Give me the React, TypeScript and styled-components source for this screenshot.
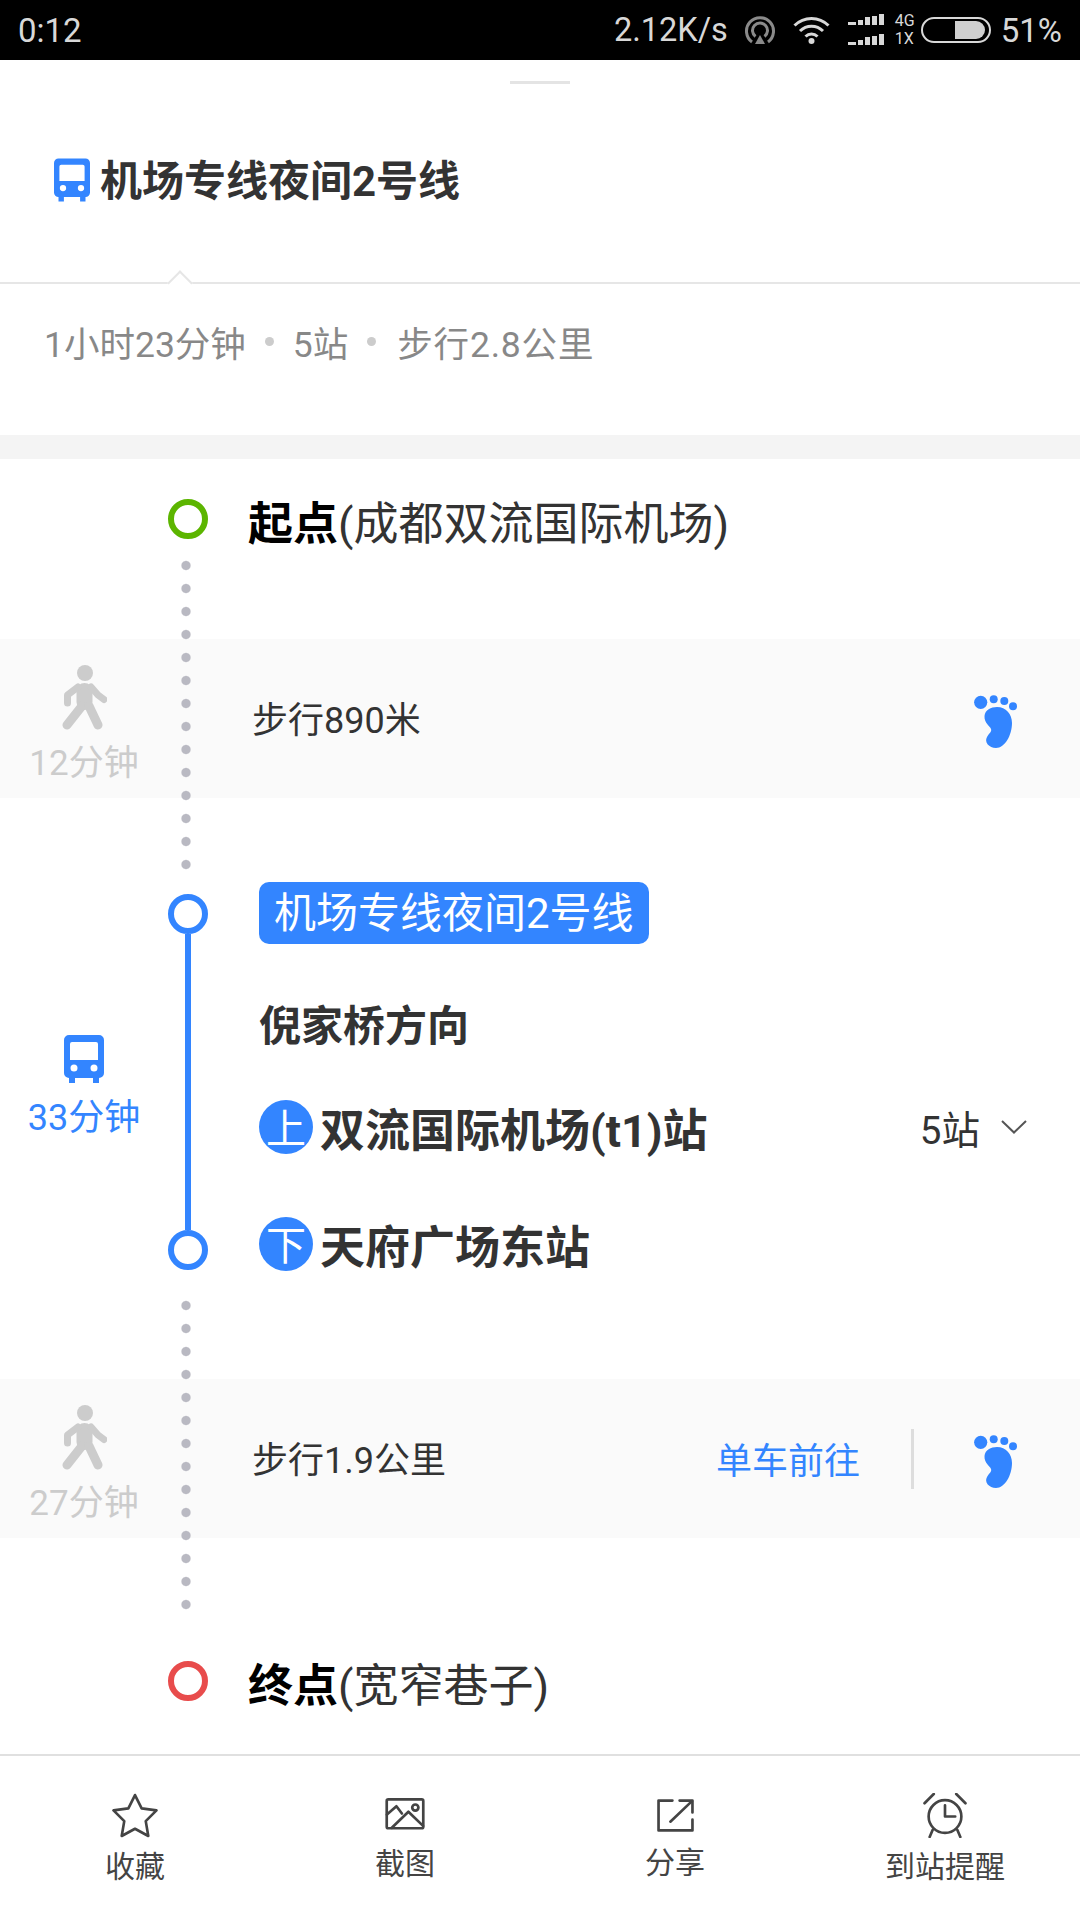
import React from 'react';
import styled, { createGlobalStyle } from 'styled-components';

const BLUE = '#3385ff';
const FONT = 'Roboto, "Noto Sans CJK SC", sans-serif';

const GlobalStyle = createGlobalStyle`
    html, body {
        margin: 0;
        padding: 0;
        background: #fff;
    }
    * {
        box-sizing: border-box;
    }
`;

const Page = styled.div`
    color: #333;
    display: flex;
    flex-direction: column;
    font-family: ${FONT};
    height: 1920px;
    overflow: hidden;
    width: 1080px;
`;

const StatusBar = styled.div`
    align-items: center;
    background: #000;
    color: #d8d8d8;
    display: flex;
    flex-shrink: 0;
    font-size: 33px;
    height: 60px;
    padding: 0 18px;
`;

const StatusSpeed = styled.span`
    font-size: 32.5px;
    margin-left: auto;
    margin-right: 17px;
`;

const StatusIcon = styled.svg<{ $left?: number }>`
    display: block;
    flex-shrink: 0;
    margin-left: ${props => props.$left || 0}px;
`;

const NetworkLabel = styled.div`
    display: flex;
    flex-direction: column;
    font-size: 16px;
    line-height: 18px;
    margin: 0 6px 0 11px;
`;

const StatusPercent = styled.span`
    margin-left: 10px;
`;

const Header = styled.div`
    border-bottom: 2px solid #e6e6e6;
    flex-shrink: 0;
    height: 224px;
    padding-top: 21px;
    position: relative;
`;

const Handle = styled.div`
    background: #e4e4e4;
    height: 3px;
    margin: 0 auto;
    width: 60px;
`;

const TitleRow = styled.div`
    align-items: center;
    display: flex;
    gap: 10px;
    margin-top: 68px;
    padding-left: 54px;
`;

const Title = styled.h1`
    color: #333;
    font-size: 42px;
    font-weight: 700;
    line-height: 60px;
    margin: 0;
`;

const Notch = styled.div`
    background: #fff;
    border-left: 2px solid #e6e6e6;
    border-top: 2px solid #e6e6e6;
    bottom: -10px;
    height: 18px;
    left: 171px;
    position: absolute;
    transform: rotate(45deg);
    width: 18px;
`;

const Summary = styled.div`
    align-items: center;
    color: #888;
    display: flex;
    flex-shrink: 0;
    font-size: 35.5px;
    gap: 19px;
    height: 151px;
    padding: 0 0 36px 44px;
`;

const SummaryDot = styled.span`
    background: #ccc;
    border-radius: 50%;
    height: 9px;
    width: 9px;
`;

const SummaryWalk = styled.span`
    letter-spacing: 0.8px;
    margin-left: 2px;
`;

const Gap = styled.div`
    background: #f4f4f4;
    flex-shrink: 0;
    height: 24px;
`;

const Route = styled.div`
    display: flex;
    flex: 1;
    flex-direction: column;
    min-height: 0;
`;

const EndpointRow = styled.div<{ $top: number }>`
    align-items: flex-start;
    display: flex;
    padding: ${props => props.$top}px 0 0 168px;
`;

const Ring = styled.div<{ $color: string }>`
    border: 6px solid ${props => props.$color};
    border-radius: 50%;
    flex-shrink: 0;
    height: 40px;
    width: 40px;
`;

const EndpointText = styled.div`
    color: #333;
    font-size: 45px;
    line-height: 60px;
    margin: -4px 0 -20px 40px;

    b {
        color: #000;
        font-weight: 700;
    }
`;

const WalkSegment = styled.div<{ $top: number; $bottom: number }>`
    padding: ${props => props.$top}px 0 ${props => props.$bottom}px;
    position: relative;
`;

const DotTrail = styled.div<{ $top: number }>`
    background-image: radial-gradient(circle at center, #b9b9c2 0, #b9b9c2 4px, rgba(185, 185, 194, 0) 5.2px);
    background-position: center top;
    background-repeat: repeat-y;
    background-size: 12px 23px;
    height: 322px;
    left: 180px;
    position: absolute;
    top: ${props => props.$top}px;
    width: 12px;
`;

const WalkBand = styled.div`
    align-items: center;
    background: #fafafa;
    display: flex;
    height: 159px;
    padding-right: 62px;
`;

const TimeColumn = styled.div<{ $color: string }>`
    align-items: center;
    color: ${props => props.$color};
    display: flex;
    flex-direction: column;
    flex-shrink: 0;
    font-size: 35px;
    line-height: 48px;
    padding-top: 15px;
    width: 168px;
`;

const WalkIconWrap = styled.svg`
    display: block;
    margin-bottom: 10px;
`;

const WalkText = styled.div`
    font-size: 36px;
    margin: 0 0 4px 84px;
`;

const BikeLink = styled.div`
    color: ${BLUE};
    font-size: 36px;
    margin: 0 0 2px auto;
`;

const BandDivider = styled.div`
    background: #ddd;
    height: 60px;
    margin: 0 60px 0 51px;
    width: 3px;
`;

const FootIcon = styled.svg<{ $auto?: boolean }>`
    display: block;
    flex-shrink: 0;
    margin-left: ${props => (props.$auto ? 'auto' : '0')};
    margin-top: 6px;
`;

const BusLeg = styled.div`
    display: flex;
    height: 388px;
`;

const BusTime = styled(TimeColumn)`
    font-size: 36px;
    padding-top: 153px;
`;

const BusIcon = styled.svg`
    display: block;
    flex-shrink: 0;
`;

const LineColumn = styled.div`
    align-items: center;
    display: flex;
    flex-direction: column;
    flex-shrink: 0;
    padding-top: 12px;
    width: 40px;
`;

const BusLine = styled.div`
    background: ${BLUE};
    flex: 1;
    width: 6px;
`;

const BusContent = styled.div`
    display: flex;
    flex: 1;
    flex-direction: column;
    padding: 0 53px 0 51px;
`;

const LineTag = styled.div`
    align-self: flex-start;
    background: ${BLUE};
    border-radius: 10px;
    color: #fff;
    font-size: 42px;
    height: 62px;
    line-height: 64px;
    padding: 0 15px;
`;

const Direction = styled.div`
    color: #333;
    font-size: 42px;
    font-weight: 700;
    line-height: 60px;
    margin-top: 53px;
`;

const StopRow = styled.div<{ $top: number }>`
    align-items: center;
    display: flex;
    height: 54px;
    margin-top: ${props => props.$top}px;
`;

const StopBadge = styled.div`
    align-items: center;
    background: ${BLUE};
    border-radius: 50%;
    color: #fff;
    display: flex;
    flex-shrink: 0;
    font-size: 40px;
    height: 54px;
    justify-content: center;
    padding-bottom: 3px;
    width: 54px;
`;

const StopName = styled.div`
    color: #333;
    font-size: 45px;
    font-weight: 700;
    margin-left: 7px;
`;

const StopCount = styled.div`
    align-items: center;
    display: flex;
    font-size: 38.5px;
    gap: 21px;
    margin-left: auto;
`;

const TabBar = styled.div`
    border-top: 2px solid #e0e0e0;
    display: grid;
    flex-shrink: 0;
    grid-template-columns: repeat(4, 1fr);
    height: 166px;
`;

const Tab = styled.div<{ $iconTop: number; $labelGap: number }>`
    align-items: center;
    color: #444;
    display: flex;
    flex-direction: column;
    font-size: 30px;
    gap: ${props => props.$labelGap}px;
    line-height: 40px;
    padding-top: ${props => props.$iconTop}px;
`;

const TabIcon = styled.svg`
    display: block;
    fill: none;
    stroke: #444;
    stroke-linecap: round;
    stroke-linejoin: round;
    stroke-width: 2.6;
`;

const Bus: React.FC<{ className?: string; width: number; height: number }> = ({ className, width, height }) => (
    <BusIcon className={className} width={width} height={height} viewBox="0 0 40 48">
        <path
            fill={BLUE}
            fillRule="evenodd"
            d="M5 0H35A5 5 0 0 1 40 5V38A5 5 0 0 1 35 43V48H29V43H11V48H5V43A5 5 0 0 1 0 38V5A5 5 0 0 1 5 0ZM8 7A2 2 0 0 0 6 9V25H34V9A2 2 0 0 0 32 7ZM10 29.5A3.5 3.5 0 1 0 10 36.5A3.5 3.5 0 1 0 10 29.5ZM30 29.5A3.5 3.5 0 1 0 30 36.5A3.5 3.5 0 1 0 30 29.5Z"
        />
    </BusIcon>
);

const TitleBus = styled(Bus)`
    margin-top: -4px;
`;

const BusTimeIcon = styled(Bus)`
    margin-bottom: 11px;
`;

const Walker = () => (
    <WalkIconWrap width={45} height={65} viewBox="0 0 45 65">
        <circle cx="23" cy="8" r="8" fill="#ccc" />
        <g fill="none" stroke="#ccc" strokeLinecap="round" strokeLinejoin="round">
            <path d="M22.500 26V37" strokeWidth="16" />
            <path d="M16 22L5.500 30V38" strokeWidth="7" />
            <path d="M29 22L36 30L42 34.500" strokeWidth="7" />
            <path d="M20 41L5 60" strokeWidth="9" />
            <path d="M27 41L36 60" strokeWidth="9" />
        </g>
    </WalkIconWrap>
);

const Foot: React.FC<{ auto?: boolean }> = ({ auto }) => (
    <FootIcon $auto={auto} width={44} height={54} viewBox="0 0 44 54" fill={BLUE}>
        <circle cx="6.7" cy="7.3" r="6.6" />
        <circle cx="19.7" cy="4.3" r="4" />
        <circle cx="30.3" cy="6" r="4" />
        <circle cx="39" cy="11.3" r="4" />
        <path d="M23 12C32 12 38 19 38 28C38 40 31 53 22 53C15 53 10 47 13 42C15 38 18 37 17 34C16 31 10 28 10.5 21C11 15 17 12 23 12Z" />
    </FootIcon>
);

const App: React.FC = () => (
    <Page>
        <GlobalStyle />
        <StatusBar>
            <span>0:12</span>
            <StatusSpeed>2.12K/s</StatusSpeed>
            <StatusIcon width={30} height={30} viewBox="0 0 30 30" fill="none" stroke="#8a8a8a" strokeWidth="3">
                <path d="M7 27A13.5 13.5 0 1 1 23 27" />
                <path d="M10.5 21.5A7.5 7.5 0 1 1 19.5 21.5" />
                <path d="M15 20L20 29H10Z" fill="#8a8a8a" stroke="none" />
            </StatusIcon>
            <StatusIcon $left={18} width={37} height={28} viewBox="0 0 37 28" fill="none" stroke="#d8d8d8" strokeWidth="3">
                <path d="M1.5 9.5C11 0 26 0 35.5 9.5" />
                <path d="M7 15C13.5 8.500 23.500 8.500 30 15" />
                <path d="M12.500 20.500C16 17 21 17 24.500 20.500" />
                <circle cx="18.500" cy="25" r="3" fill="#d8d8d8" stroke="none" />
            </StatusIcon>
            <StatusIcon $left={18} width={36} height={32} viewBox="0 0 36 32" fill="#d8d8d8">
                <rect x="0" y="8" width="8" height="3" />
                <rect x="10" y="6" width="5" height="5" />
                <rect x="17" y="3" width="5" height="8" />
                <rect x="24" y="2" width="5" height="9" />
                <rect x="31" y="0" width="5" height="11" />
                <rect x="0" y="28" width="8" height="3" />
                <rect x="10" y="26" width="5" height="5" />
                <rect x="17" y="23" width="5" height="8" />
                <rect x="24" y="22" width="5" height="9" />
                <rect x="31" y="20" width="5" height="11" />
            </StatusIcon>
            <NetworkLabel>
                <span>4G</span>
                <span>1X</span>
            </NetworkLabel>
            <StatusIcon width={70} height={26} viewBox="0 0 70 26">
                <rect x="1" y="1" width="68" height="24" rx="12" fill="none" stroke="#d8d8d8" strokeWidth="2" />
                <path d="M34 4H55A9 9 0 0 1 64 13A9 9 0 0 1 55 22H34Z" fill="#d0d0d0" />
            </StatusIcon>
            <StatusPercent>51%</StatusPercent>
        </StatusBar>

        <Header>
            <Handle />
            <TitleRow>
                <TitleBus width={36} height={44} />
                <Title>机场专线夜间2号线</Title>
            </TitleRow>
            <Notch />
        </Header>
        <Summary>
            <span>1小时23分钟</span>
            <SummaryDot />
            <span>5站</span>
            <SummaryDot />
            <SummaryWalk>步行2.8公里</SummaryWalk>
        </Summary>
        <Gap />

        <Route>
            <EndpointRow $top={40}>
                <Ring $color="#5cb500" />
                <EndpointText>
                    <b>起点</b>(成都双流国际机场)
                </EndpointText>
            </EndpointRow>
            <WalkSegment $top={100} $bottom={84}>
                <DotTrail $top={15} />
                <WalkBand>
                    <TimeColumn $color="#ccc">
                        <Walker />
                        <span>12分钟</span>
                    </TimeColumn>
                    <WalkText>步行890米</WalkText>
                    <Foot auto />
                </WalkBand>
            </WalkSegment>
            <BusLeg>
                <BusTime $color={BLUE}>
                    <BusTimeIcon width={40} height={48} />
                    <span>33分钟</span>
                </BusTime>
                <LineColumn>
                    <Ring $color={BLUE} />
                    <BusLine />
                    <Ring $color={BLUE} />
                </LineColumn>
                <BusContent>
                    <LineTag>机场专线夜间2号线</LineTag>
                    <Direction>倪家桥方向</Direction>
                    <StopRow $top={43}>
                        <StopBadge>上</StopBadge>
                        <StopName>双流国际机场(t1)站</StopName>
                        <StopCount>
                            <span>5站</span>
                            <svg width={26} height={14} viewBox="0 0 26 14" fill="none" stroke="#555" strokeWidth="2">
                                <path d="M1 1L13 12.500L25 1" />
                            </svg>
                        </StopCount>
                    </StopRow>
                    <StopRow $top={63}>
                        <StopBadge>下</StopBadge>
                        <StopName>天府广场东站</StopName>
                    </StopRow>
                </BusContent>
            </BusLeg>
            <WalkSegment $top={109} $bottom={123}>
                <DotTrail $top={24} />
                <WalkBand>
                    <TimeColumn $color="#ccc">
                        <Walker />
                        <span>27分钟</span>
                    </TimeColumn>
                    <WalkText>步行1.9公里</WalkText>
                    <BikeLink>单车前往</BikeLink>
                    <BandDivider />
                    <Foot />
                </WalkBand>
            </WalkSegment>
            <EndpointRow $top={0}>
                <Ring $color="#e84c4c" />
                <EndpointText>
                    <b>终点</b>(宽窄巷子)
                </EndpointText>
            </EndpointRow>
        </Route>

        <TabBar>
            <Tab $iconTop={37} $labelGap={9}>
                <TabIcon width={46} height={45} viewBox="0 0 44 44">
                    <path d="M22 2L28.500 15L43 17L32.500 27.500L35 42L22 35L9 42L11.500 27.500L1 17L15.500 15Z" />
                </TabIcon>
                <span>收藏</span>
            </Tab>
            <Tab $iconTop={42} $labelGap={14}>
                <TabIcon width={40} height={32} viewBox="0 0 38 31">
                    <rect x="1.300" y="1.300" width="35.400" height="28" rx="1.500" />
                    <path d="M1.500 16L10.700 8L16 15" />
                    <path d="M6 29L22.300 13.300L36.500 27" />
                    <circle cx="29" cy="9.300" r="3" />
                </TabIcon>
                <span>截图</span>
            </Tab>
            <Tab $iconTop={43} $labelGap={11}>
                <TabIcon width={37} height={33} viewBox="0 0 36 32">
                    <path d="M15 1.500H1.500V30.500H34.500V20" />
                    <path d="M22 1.500H34.500V13" />
                    <path d="M34 2L13 22" />
                </TabIcon>
                <span>分享</span>
            </Tab>
            <Tab $iconTop={37} $labelGap={9}>
                <TabIcon width={44} height={45} viewBox="0 0 42 44">
                    <circle cx="21" cy="23" r="16" />
                    <path d="M21 12V23H31" />
                    <path d="M1 10L10 1" />
                    <path d="M32 1L41 10" />
                    <path d="M9 36L6 43" />
                    <path d="M33 36L36 43" />
                </TabIcon>
                <span>到站提醒</span>
            </Tab>
        </TabBar>
    </Page>
);

export default App;
